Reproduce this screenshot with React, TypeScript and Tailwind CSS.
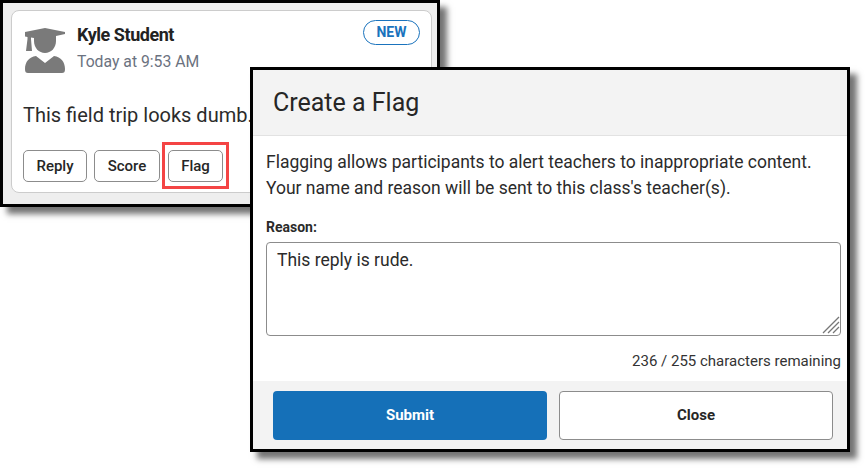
export default function App() {
  return (
    <div className="relative w-[865px] h-[474px] bg-white overflow-hidden text-[#262626] font-['Roboto',sans-serif]">
      <section className="absolute left-0 top-0 w-[440px] h-[207px] border-[3px] border-black bg-[#eeeeee] pl-2 pt-[7px] shadow-[7px_7px_6px_rgba(0,0,0,0.55)]">
        <div className="h-[183px] w-[421px] rounded-[8px] border border-[#cccccc] bg-white pl-[11px] pt-[14px] flex flex-col">
          <div className="flex justify-between pr-[11px]">
            <div className="flex gap-[11px]">
              <svg width="42" height="47" viewBox="0 0 42 47" className="mt-[2px] ml-[1px] text-[#7a7a7a]" fill="currentColor">
                <path d="M21 1 L41 5 L41 7 L32 9 L32 14 C32 21 27 26 21 26 C15 26 10 21 10 14 L10 11 L7 10.5 L7 12 L8 24 L2 24 L3.5 12 L3.5 10 L1 9.5 L1 5 Z" />
                <path d="M12 29 L21 36 L30 29 C37 30 41 35 41 42 C41 45 40 46 38 46 L4 46 C2 46 1 45 1 42 C1 35 5 30 12 29 Z" />
              </svg>
              <div className="flex flex-col -mt-[1px]">
                <span className="text-[18px] leading-[22px] font-bold tracking-[-0.45px] text-[#222222]">Kyle Student</span>
                <span className="text-[15.75px] leading-[20px] mt-[6px] text-[#6b7280]">Today at 9:53 AM</span>
              </div>
            </div>
            <span className="h-[25px] w-[57px] -mt-[5px] rounded-full border border-[#1a73bd] flex items-center justify-center text-[14px] font-bold text-[#1a73bd]">NEW</span>
          </div>
          <p className="mt-[28px] text-[20px] leading-[26px] text-[#2b2b2b] whitespace-nowrap">This field trip looks dumb.</p>
          <div className="mt-[22px] flex items-center">
            <button className="w-[64px] h-[32px] rounded-[5px] border border-[#8c8c8c] bg-white text-[15px] font-medium">Reply</button>
            <button className="ml-[7px] w-[66px] h-[32px] rounded-[5px] border border-[#8c8c8c] bg-white text-[15px] font-medium">Score</button>
            <div className="relative ml-2">
              <button className="block w-[55px] h-[32px] rounded-[5px] border border-[#8c8c8c] bg-white text-[15px] font-medium">Flag</button>
              <span className="absolute -left-[6px] -right-[6px] -top-[8px] -bottom-[7px] border-[3px] border-[#f44444]" />
            </div>
          </div>
        </div>
      </section>

      <section className="absolute left-[250px] top-[67px] w-[600px] h-[385px] border-[3px] border-black bg-white shadow-[7px_7px_6px_rgba(0,0,0,0.55)] flex flex-col">
        <header className="h-[66px] shrink-0 bg-[#f3f3f3] border-b border-[#e2e2e2] pl-5 flex items-center">
          <h1 className="text-[25px] font-normal text-[#262626]">Create a Flag</h1>
        </header>
        <div className="flex-1 px-[13px] pt-[13px] flex flex-col">
          <p className="text-[17.5px] leading-[26px] text-[#2b2b2b]">
            Flagging allows participants to alert teachers to inappropriate content.
            <br />
            Your name and reason will be sent to this class's teacher(s).
          </p>
          <label className="mt-[17px] text-[14px] leading-[18px] font-bold text-[#2b2b2b]">Reason:</label>
          <div className="relative mt-[6px] w-[575px] h-[94px]">
            <textarea
              readOnly
              defaultValue="This reply is rude."
              className="block w-full h-full resize-none rounded-[4px] border border-[#8c8c8c] px-[10px] py-[5px] text-[17.5px] leading-[24px] text-[#2b2b2b] outline-none"
            />
            <svg width="18" height="18" viewBox="0 0 18 18" className="absolute right-[1px] bottom-[2px]" stroke="#777777" strokeWidth="1.3" fill="none">
              <path d="M1 17 L17 1 M6 17 L17 6 M11 17 L17 11" />
            </svg>
          </div>
          <div className="mt-[15px] w-[575px] text-right text-[15px] leading-[20px] text-[#333333]">236 / 255 characters remaining</div>
        </div>
        <footer className="h-[68px] shrink-0 bg-[#f3f3f3] pl-5 pr-[14px] pt-[10px] flex gap-3">
          <button className="w-[274px] h-[49px] rounded-[4px] bg-[#1570b8] text-white text-[15px] font-bold">Submit</button>
          <button className="w-[274px] h-[49px] rounded-[4px] border border-[#8c8c8c] bg-white text-[#262626] text-[15px] font-bold">Close</button>
        </footer>
      </section>
    </div>
  );
}
